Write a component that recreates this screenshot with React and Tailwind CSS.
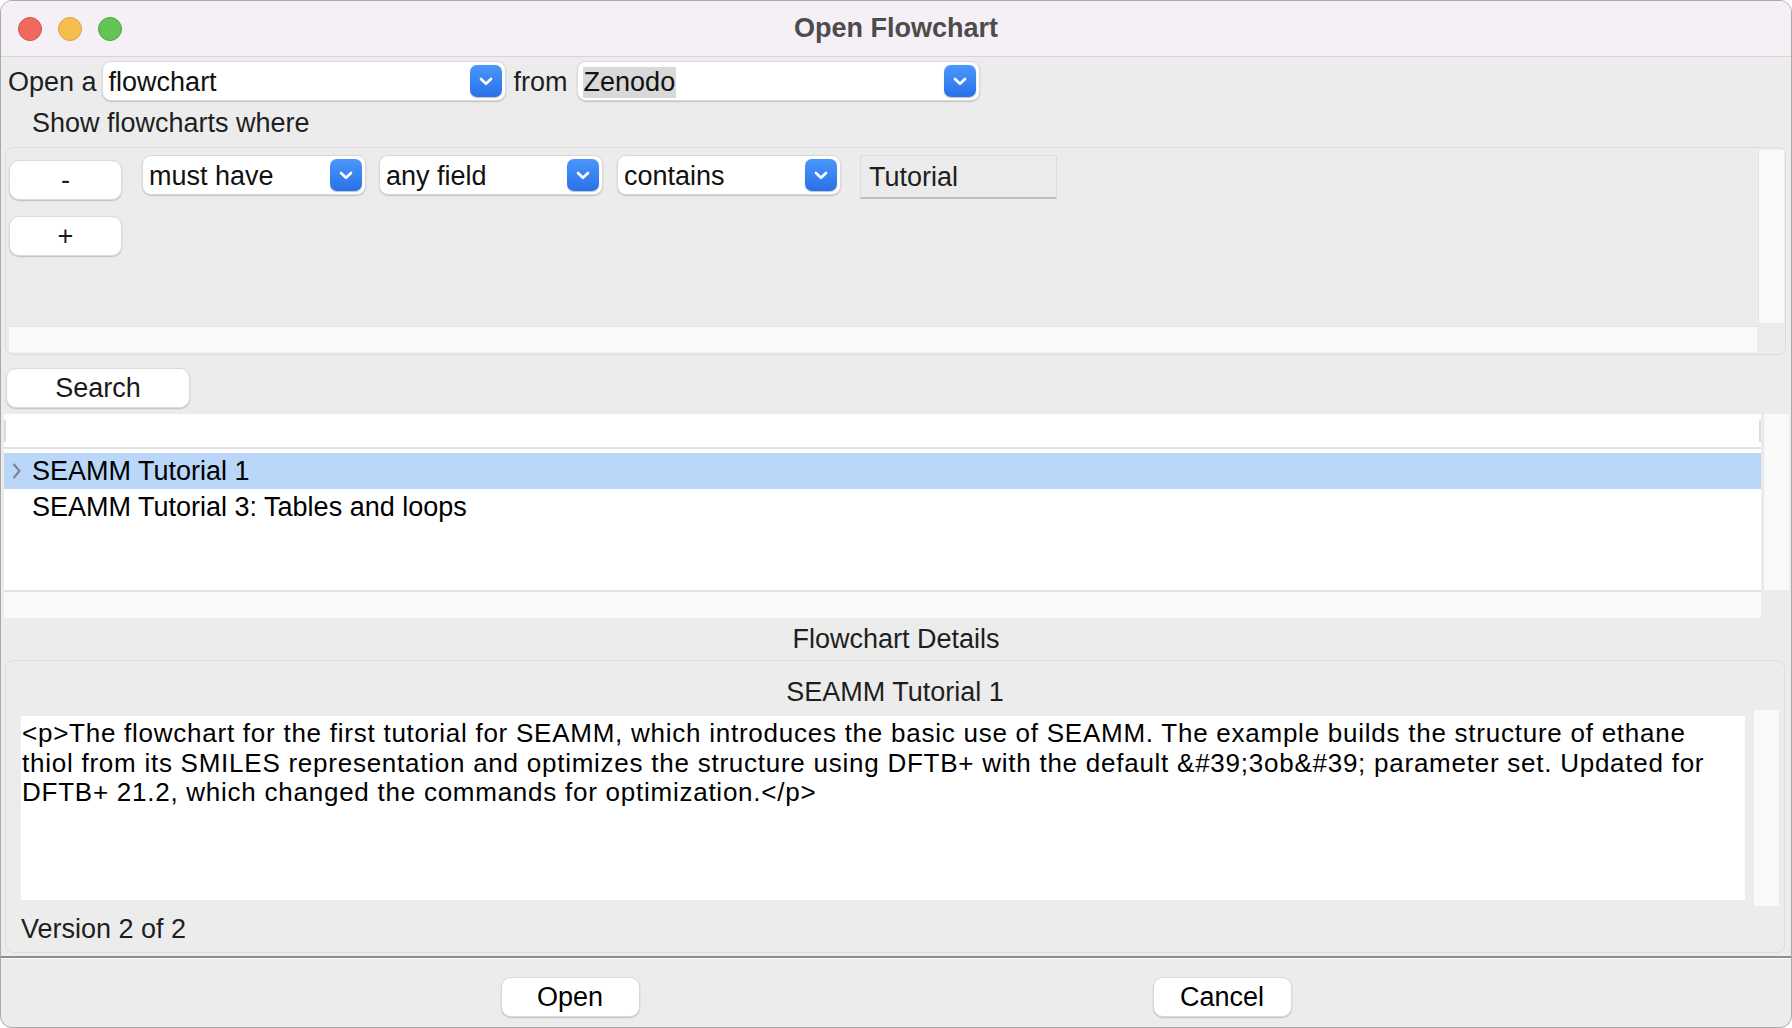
import React from 'react';

const ui = "font-['Liberation_Sans',Arial,sans-serif]";

const Chevron = () => (
  <svg width="14" height="9" viewBox="0 0 14 9" fill="none">
    <path d="M2 2 L7 6.8 L12 2" stroke="white" strokeWidth="2.6" strokeLinecap="round" strokeLinejoin="round" />
  </svg>
);

const Combo = ({ value, width, selected }) => (
  <div className={`flex items-center h-[40px] bg-white rounded-[9px] border border-[#d9d9d9] shadow-[0_1px_1.5px_rgba(0,0,0,0.18)] pl-[5px] pr-[3px] ${width}`}>
    <div className="flex-1 min-w-0 pt-[3px]">
      <span className={`inline-block leading-[31px] px-[1px] text-[27px] text-[#111] ${selected ? 'bg-[#d9d9d9]' : ''}`}>{value}</span>
    </div>
    <div className="w-[32px] h-[32px] rounded-[7px] bg-gradient-to-b from-[#4a97fa] to-[#2a70ea] flex items-center justify-center shadow-[0_0.5px_1px_rgba(0,0,0,0.25)]">
      <Chevron />
    </div>
  </div>
);

const Button = ({ label, className }) => (
  <div className={`flex items-center justify-center h-[40px] bg-white rounded-[10px] border border-[#dadada] shadow-[0_1px_1.5px_rgba(0,0,0,0.2)] text-[27px] text-[#1a1a1a] ${className}`}>
    {label}
  </div>
);

export default function App() {
  return (
    <div className={`w-[1792px] h-[1028px] bg-white ${ui}`}>
      <div className="w-full h-full flex flex-col bg-[#ececec] rounded-[12px] border border-[#a9a9a9] overflow-hidden">
        {/* title bar */}
        <div className="h-[56px] shrink-0 grid grid-cols-[1fr_auto_1fr] items-center bg-[#f5f0f6] border-b border-[#d7d3d7]">
          <div className="flex items-center gap-[16px] pl-[17px]">
            <div className="w-[24px] h-[24px] rounded-full bg-[#ee6a5f] border border-[#d5544a]" />
            <div className="w-[24px] h-[24px] rounded-full bg-[#f5bf4f] border border-[#d8a445]" />
            <div className="w-[24px] h-[24px] rounded-full bg-[#61c454] border border-[#4fa83f]" />
          </div>
          <div className="text-[27px] font-bold text-[#4c4c4c]">Open Flowchart</div>
          <div />
        </div>

        {/* open a ... from ... */}
        <div className="flex items-center h-[40px] mt-[4px] pl-[7px] text-[27px] text-[#1e1e1e]">
          <span className="pt-[3px]">Open a</span>
          <Combo value="flowchart" width="w-[404px] ml-[5px]" />
          <span className="ml-[8px] pt-[3px]">from</span>
          <Combo value="Zenodo" width="w-[403px] ml-[9px]" selected />
        </div>

        <div className="h-[40px] flex items-center pl-[31px] pt-[4px] text-[27px] text-[#1e1e1e]">Show flowcharts where</div>

        {/* criteria frame */}
        <div className="mt-[6px] ml-[4px] mr-[5px] h-[208px] shrink-0 rounded-[8px] border border-[#dcdcdc] pt-[2px] pl-[3px] pr-[1px] pb-[2px] grid grid-cols-[1fr_26px] grid-rows-[173px_26px] gap-x-[1px] gap-y-[3px]">
          <div className="flex flex-col">
            <div className="flex items-start pt-[5px]">
              <Button label="-" className="w-[113px] mt-[5px]" />
              <div className="ml-[20px]"><Combo value="must have" width="w-[224px]" /></div>
              <div className="ml-[13px]"><Combo value="any field" width="w-[224px]" /></div>
              <div className="ml-[14px]"><Combo value="contains" width="w-[224px]" /></div>
              <div className="ml-[19px] w-[197px] h-[44px] flex items-center pl-[8px] pt-[2px] bg-[#ebebeb] border-t border-l border-r border-[#dddddd] border-b-2 border-b-[#bdbdbd] text-[27px] text-[#1e1e1e]">
                Tutorial
              </div>
            </div>
            <Button label="+" className="w-[113px] mt-[16px]" />
          </div>
          <div className="bg-[#f9f9f9] border-l border-[#e4e4e4]" />
          <div className="bg-[#f9f9f9] border-t border-[#e4e4e4]" />
          <div />
        </div>

        {/* search */}
        <Button label="Search" className="w-[184px] ml-[5px] mt-[13px] shrink-0" />

        {/* results tree */}
        <div className="mt-[6px] ml-[3px] mr-[2px] shrink-0 grid grid-cols-[1fr_26px] grid-rows-[176px_28px] gap-x-[2px]">
          <div className="bg-white flex flex-col">
            <div className="h-[33px] flex items-center justify-between">
              <div className="w-[2px] h-[22px] bg-[#dcdcdc]" />
              <div className="w-[2px] h-[22px] bg-[#dcdcdc]" />
            </div>
            <div className="h-[2px] bg-[#e2e2e2]" />
            <div className="h-[4px]" />
            <div className="h-[36px] bg-[#bad6f9] flex items-center text-[27px] text-black">
              <svg width="28" height="16" viewBox="0 0 28 16" className="shrink-0">
                <path d="M10 1.5 L15.5 8 L10 14.5" stroke="#7b8390" strokeWidth="2" fill="none" strokeLinecap="round" strokeLinejoin="round" />
              </svg>
              <span>SEAMM Tutorial 1</span>
            </div>
            <div className="h-[37px] flex items-center pl-[28px] text-[27px] text-black">SEAMM Tutorial 3: Tables and loops</div>
          </div>
          <div className="bg-[#f9f9f9] border-l border-[#e6e6e6]" />
          <div className="bg-[#f9f9f9] border-t-2 border-[#e3e3e3]" />
          <div />
        </div>

        <div className="h-[42px] shrink-0 flex items-center justify-center text-[27px] text-[#1e1e1e]">Flowchart Details</div>

        {/* details frame */}
        <div className="ml-[4px] mr-[6px] h-[293px] shrink-0 rounded-[8px] border border-[#dddddd] flex flex-col">
          <div className="h-[49px] pt-[16px] text-center leading-[30px] text-[27px] text-[#1e1e1e]">SEAMM Tutorial 1</div>
          <div className="h-[196px] flex items-center pl-[15px]">
            <div className="w-[1724px] h-[184px] bg-white pl-[1px] pt-[3px] text-[26px] leading-[29.6px] tracking-[0.75px] text-black whitespace-nowrap">
              <div>&lt;p&gt;The flowchart for the first tutorial for SEAMM, which introduces the basic use of SEAMM. The example builds the structure of ethane</div>
              <div>thiol from its SMILES representation and optimizes the structure using DFTB+ with the default &amp;#39;3ob&amp;#39; parameter set. Updated for</div>
              <div>DFTB+ 21.2, which changed the commands for optimization.&lt;/p&gt;</div>
            </div>
            <div className="ml-[8px] w-[26px] h-[196px] bg-[#f9f9f9] border-l border-[#e8e8e8]" />
          </div>
          <div className="flex-1 flex items-center pl-[15px] text-[27px] text-[#1e1e1e]">Version 2 of 2</div>
        </div>

        <div className="mt-[3px] h-[2px] shrink-0 bg-[#8e8e8e]" />
        <div className="h-[1px] shrink-0 bg-[#fafafa]" />

        {/* bottom buttons */}
        <div className="flex justify-center gap-[513px] pt-[18px]">
          <Button label="Open" className="w-[139px] text-black" />
          <Button label="Cancel" className="w-[139px] text-black" />
        </div>
      </div>
    </div>
  );
}
